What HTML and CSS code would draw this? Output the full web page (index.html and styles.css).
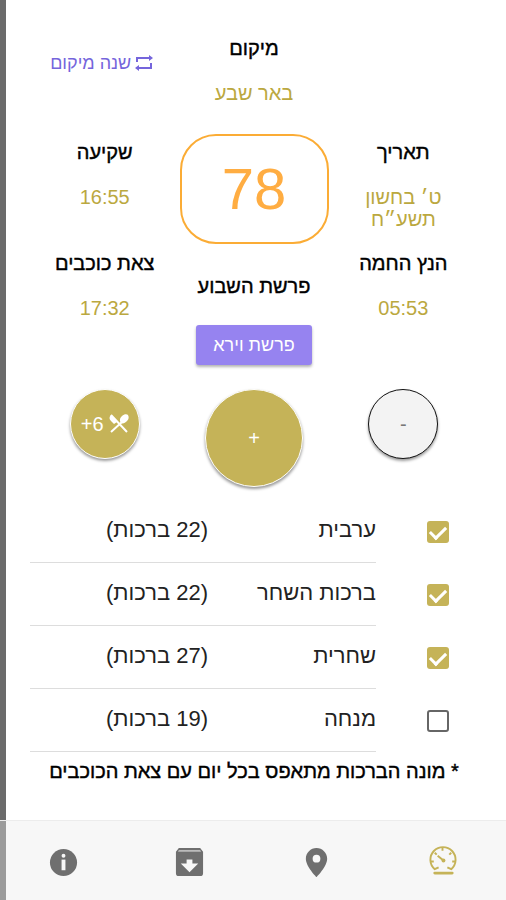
FILE: index.html
```html
<!DOCTYPE html>
<html lang="he" dir="rtl">
<head>
<meta charset="utf-8">
<meta name="viewport" content="width=device-width, initial-scale=1">
<title>מונה ברכות</title>
<link rel="stylesheet" href="styles.css">
</head>
<body>
<main class="content">
  <header class="columns location">
    <div class="stat location-stat">
      <h2 class="label">מיקום</h2>
      <p class="value">באר שבע</p>
    </div>
    <a class="change" href="#location">
      <svg class="change-icon" viewBox="0 0 18 18" aria-hidden="true">
        <path d="M2 8V4H14M16 9V14H4" fill="none" stroke="currentColor" stroke-width="2"/>
        <path d="M14 1l4 3-4 3zM4 11l-4 3 4 3z" fill="currentColor"/>
      </svg>
      <span>שנה מיקום</span>
    </a>
  </header>

  <section class="columns times">
    <div class="stat"><h2 class="label">תאריך</h2><p class="value">ט׳ בחשון<br>תשע״ח</p></div>
    <div class="center">
      <output class="counter">78</output>
      <h2 class="label">פרשת השבוע</h2>
      <button class="parasha" type="button">פרשת וירא</button>
    </div>
    <div class="stat"><h2 class="label">שקיעה</h2><p class="value">16:55</p></div>
    <div class="stat"><h2 class="label">הנץ החמה</h2><p class="value">05:53</p></div>
    <div class="stat"><h2 class="label">צאת כוכבים</h2><p class="value">17:32</p></div>
  </section>

  <section class="columns actions">
    <button class="round minus" type="button">-</button>
    <button class="round plus" type="button">+</button>
    <button class="round meal" type="button">
      <svg class="meal-icon" viewBox="0 0 20 20" aria-hidden="true">
        <path d="M2 1C0 3 0 5 2 7L5 10 8 8z" fill="currentColor"/>
        <path d="M2 1L18 18M2 18L13 8" stroke="currentColor" stroke-width="2"/>
        <path d="M12 9C10 6 11 4 13 2 15 0 18 0 19 1 20 3 20 5 18 7 16 9 14 10 12 9z" fill="currentColor"/>
      </svg>
      <span dir="ltr">+6</span>
    </button>
  </section>

  <ul class="prayers">
    <li class="prayer"><input class="check" type="checkbox" id="arvit" checked><label class="row" for="arvit"><span>ערבית</span><span>(22 ברכות)</span></label></li>
    <li class="prayer"><input class="check" type="checkbox" id="dawn" checked><label class="row" for="dawn"><span>ברכות השחר</span><span>(22 ברכות)</span></label></li>
    <li class="prayer"><input class="check" type="checkbox" id="shacharit" checked><label class="row" for="shacharit"><span>שחרית</span><span>(27 ברכות)</span></label></li>
    <li class="prayer"><input class="check" type="checkbox" id="mincha"><label class="row" for="mincha"><span>מנחה</span><span>(19 ברכות)</span></label></li>
  </ul>
  <p class="note">* מונה הברכות מתאפס בכל יום עם צאת הכוכבים</p>
</main>

<nav class="tabs">
  <a class="tab active" href="#counter" aria-label="מונה">
    <svg class="tab-icon" viewBox="0 0 32 32" aria-hidden="true">
      <g fill="none" stroke="currentColor" stroke-width="2">
        <path d="M12 23L8 25A13 13 0 1 1 25 25L21 23"/>
        <path d="M16 3v3M8 8l2 2M25 8l-2 2M4 17h3M29 17h-3M11 11l6 5"/>
        <path d="M8 29h18" stroke-width="3" stroke-linecap="round"/>
      </g>
      <circle cx="17" cy="16" r="2" fill="currentColor"/>
    </svg>
  </a>
  <a class="tab" href="#map" aria-label="מיקום">
    <svg class="tab-icon" viewBox="0 0 32 32" aria-hidden="true"><path fill="currentColor" fill-rule="evenodd" d="M16 1C10 1 5 6 5 12C5 20 16 31 16 31S27 20 27 12C27 6 22 1 16 1zM16 8a4 4 0 1 1 0 8 4 4 0 0 1 0-8z"/></svg>
  </a>
  <a class="tab" href="#archive" aria-label="ארכיון">
    <svg class="tab-icon" viewBox="0 0 32 32" aria-hidden="true"><path fill="currentColor" fill-rule="evenodd" d="M5 1H27L30 5V27Q30 30 27 30H5Q2 30 2 27V5zM13 13v4H7l9 9 9-9h-6v-4z"/><path d="M5 3H27L28 5H4z" fill="#bbb"/></svg>
  </a>
  <a class="tab" href="#info" aria-label="מידע">
    <svg class="tab-icon" viewBox="0 0 32 32" aria-hidden="true"><circle cx="16" cy="16" r="14" fill="currentColor"/><circle cx="16" cy="9" r="2" fill="#f7f7f7"/><path d="M14 13h4V24h-4z" fill="#f7f7f7"/></svg>
  </a>
</nav>
</body>
</html>
```
FILE: styles.css
```css
* {
  box-sizing: border-box;
}

body {
  --gold: #c5b358;
  --gold-text: #bba83f;
  --gray: #6f6f6f;
  margin: 0;
  min-height: 100vh;
  display: flex;
  flex-direction: column;
  background: linear-gradient(to right, #6b6b6b 6px, #fff 6px);
  color: #000;
  font-family: "Liberation Sans", Arial, sans-serif;
  font-size: 20px;
  line-height: 22px;
}

h2, p, ul {
  margin: 0;
  padding: 0;
}

button {
  font: inherit;
  border: 0;
  padding: 0;
  cursor: pointer;
}

a {
  text-decoration: none;
}

.content {
  flex: 1;
  padding: 37px 28px 0 30px;
}

.columns {
  display: grid;
  grid-template-columns: repeat(3, 1fr);
  justify-items: center;
}

.stat {
  display: flex;
  flex-direction: column;
  gap: 23px;
  text-align: center;
}

.label {
  font-size: 20px;
  font-weight: 400;
  -webkit-text-stroke: thin currentColor;
}

.value {
  color: var(--gold-text);
}

.location-stat {
  grid-column: 2;
}

.change {
  display: flex;
  align-items: center;
  gap: 4px;
  align-self: center;
  margin: 0 6px 16px 0;
  color: #7565dc;
  font-size: 18px;
}

.change-icon {
  width: 18px;
  height: 18px;
}

.times {
  grid-template-rows: auto 1fr;
  margin-top: 30px;
  row-gap: 22px;
}

.times .stat {
  padding-top: 7px;
}

.times .stat:nth-child(n + 4) {
  padding-top: 0;
}

.center {
  grid-column: 2;
  grid-row: 1 / span 2;
  display: flex;
  flex-direction: column;
  align-items: center;
}

.counter {
  width: 149px;
  padding: 23px 0;
  border: 2px solid #fbac35;
  border-radius: 36px;
  color: #ffad42;
  font-size: 58px;
  line-height: 60px;
  text-align: center;
}

.center .label {
  margin: 31px 0 28px;
}

.parasha {
  padding: 9px 17px;
  border-radius: 3px;
  background: #9683f0;
  color: #fff;
  font-size: 18px;
  line-height: 22px;
  box-shadow: 0 2px 3px rgba(0, 0, 0, 0.3);
}

.actions {
  margin-top: 24px;
  align-items: start;
}

.round {
  display: flex;
  align-items: center;
  justify-content: center;
  gap: 5px;
  width: 70px;
  height: 70px;
  border: 1px solid #fff;
  border-radius: 50%;
  background: var(--gold);
  color: #fff;
  box-shadow: 0 2px 3px rgba(0, 0, 0, 0.4);
}

.minus {
  border-color: #111;
  background: #f3f3f3;
  color: #777;
}

.plus {
  width: 98px;
  height: 98px;
}

.meal-icon {
  width: 20px;
  height: 20px;
}

.prayers {
  margin-top: 13px;
  list-style: none;
}

.prayer {
  display: grid;
  grid-template-columns: 102px 1fr;
  color: #222;
  font-size: 22px;
}

.check {
  appearance: none;
  display: grid;
  place-items: center;
  width: 22px;
  height: 22px;
  margin: 21px 29px 0 0;
  border: 2px solid #666;
  border-radius: 3px;
  background: #fff;
}

.check:checked {
  border: 0;
  background: var(--gold);
}

.check:checked::after {
  content: "";
  width: 7px;
  height: 13px;
  margin-bottom: 3px;
  border: solid #fff;
  border-width: 0 3px 3px 0;
  transform: rotate(45deg);
}

.row {
  display: grid;
  grid-template-columns: 168px 1fr;
  padding: 19px 0 21px;
  border-bottom: 1px solid #ddd;
}

.note {
  margin: 8px 0;
  text-align: center;
  -webkit-text-stroke: thin currentColor;
}

.tabs {
  display: grid;
  grid-template-columns: repeat(4, 1fr);
  height: 80px;
  border-top: 1px solid #ececec;
  background: linear-gradient(to right, #9b9b9b 6px, #f7f7f7 6px);
}

.tab {
  display: flex;
  align-items: center;
  justify-content: center;
  padding-top: 4px;
  color: var(--gray);
}

.active {
  padding-top: 0;
  color: var(--gold);
}

.tab-icon {
  width: 31px;
  height: 31px;
}
```
